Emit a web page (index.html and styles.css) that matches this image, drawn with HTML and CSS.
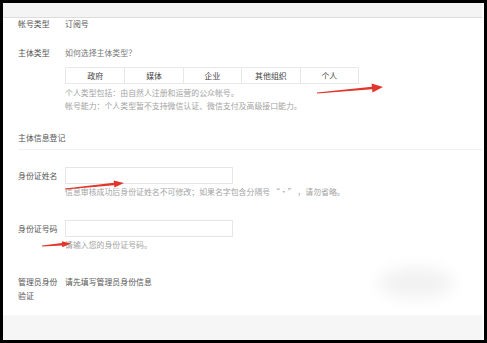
FILE: index.html
```html
<!DOCTYPE html>
<html lang="zh">
<head>
    <meta charset="UTF-8">
    <meta name="viewport" content="width=device-width, initial-scale=1.0">
    <title>主体信息登记</title>
    <link rel="stylesheet" href="styles.css">
</head>
<body>
    <div class="frame">
        <div class="topbar"></div>
        <div class="content">
            <div class="row row-account">
                <div class="label">帐号类型</div>
                <div class="value">订阅号</div>
            </div>

            <div class="row row-subject">
                <div class="label">主体类型</div>
                <div class="field">
                    <div class="value link">如何选择主体类型？</div>
                    <div class="types">
                        <div class="type">政府</div>
                        <div class="type">媒体</div>
                        <div class="type">企业</div>
                        <div class="type">其他组织</div>
                        <div class="type">个人</div>
                    </div>
                    <p class="hint hint-first">个人类型包括：由自然人注册和运营的公众帐号。</p>
                    <p class="hint">帐号能力：个人类型暂不支持微信认证、微信支付及高级接口能力。</p>
                </div>
            </div>

            <div class="section-title">主体信息登记</div>

            <div class="row row-name">
                <div class="label label-input">身份证姓名</div>
                <div class="field">
                    <input class="input" type="text">
                    <p class="hint hint-input">信息审核成功后身份证姓名不可修改；如果名字包含分隔号 “·” ，请勿省略。</p>
                </div>
            </div>

            <div class="row row-id">
                <div class="label label-input">身份证号码</div>
                <div class="field">
                    <input class="input" type="text">
                    <p class="hint hint-input">请输入您的身份证号码。</p>
                </div>
            </div>

            <div class="row row-admin">
                <div class="label label-wrap">管理员身份验证</div>
                <div class="value">请先填写管理员身份信息</div>
            </div>
        </div>
        <div class="footer"></div>
    </div>

    <!-- blurred smudge and red annotation arrows drawn over the page -->
    <div class="smudge"></div>
    <svg class="marks" width="487" height="343" viewBox="0 0 487 343">
        <polygon fill="#e0362c" points="317,92.6 371.9,86.7 371.6,83.5 383,87 372.45,92.5 372.16,89.3 317,93.4"/>
        <polygon fill="#e0362c" points="65,188.6 113.93,182.8 113.7,180.5 124,183 114.4,187.5 114.17,185.2 65,189.4"/>
        <polygon fill="#e0362c" points="42,245.6 62,243.1 61.8,241.3 71,243.5 62.3,247.3 62.1,245.5 42,246.4"/>
    </svg>
</body>
</html>
```

FILE: styles.css
```css
body {
    margin: 0;
    background: #000;
    font-family: "Noto Sans CJK SC", "Noto Sans", sans-serif;
    font-size: 7.9px;
    color: #555;
    width: 487px;
    height: 343px;
    overflow: hidden;
    position: relative;
}
.frame {
    margin: 3px 0 0 3px;
    width: 481px;
    height: 337px;
    background: #fff;
    display: flex;
    flex-direction: column;
}
.topbar {
    height: 14px;
    background: #f4f4f4;
    border-bottom: 1px solid #dcdcdc;
    margin-right: 2px;
}
.content {
    flex: 1;
    padding-left: 15px;
}
.footer {
    height: 25px;
    background: #f6f6f6;
    margin-right: 2px;
}
.row {
    display: flex;
}
.label {
    width: 47px;
    flex-shrink: 0;
    line-height: 12px;
    color: #555;
}
.value {
    line-height: 12px;
    color: #555;
}
.link {
    color: #7a7a7a;
}
.row-account {
    margin-top: 0;
}
.row-subject {
    margin-top: 17px;
}
.types {
    display: grid;
    grid-template-columns: repeat(5, 1fr);
    width: 294px;
    height: 17px;
    margin-top: 8px;
    border: 1px solid #e8e8e8;
    box-sizing: border-box;
}
.type {
    border-left: 1px solid #e8e8e8;
    text-align: center;
    line-height: 15px;
    color: #444;
}
.type:first-child {
    border-left: none;
}
.hint {
    margin: 0;
    line-height: 13px;
    color: #a3a3a3;
    white-space: nowrap;
}
.hint-first {
    margin-top: 2px;
}
.section-title {
    margin-top: 20px;
    margin-right: 2px;
    line-height: 12px;
    padding-bottom: 5px;
    border-bottom: 1px solid #f2f2f2;
    color: #555;
}
.row-name {
    margin-top: 17px;
}
.row-id {
    margin-top: 22px;
}
.input {
    display: block;
    width: 168px;
    height: 17px;
    margin: 0;
    padding: 0;
    border: 1px solid #e6e6e6;
    box-sizing: border-box;
    background: #fff;
    outline: none;
}
.label-input {
    line-height: 17px;
}
.hint-input {
    margin-top: 1px;
}
.row-admin {
    margin-top: 25px;
}
.label-wrap {
    width: 42px;
    margin-right: 5px;
    line-height: 14px;
    margin-top: -1px;
}
.smudge {
    position: absolute;
    left: 378px;
    top: 268px;
    width: 76px;
    height: 30px;
    border-radius: 50%;
    background: #f1f1f1;
    filter: blur(8px);
}
.marks {
    position: absolute;
    left: 0;
    top: 0;
    pointer-events: none;
}
```
